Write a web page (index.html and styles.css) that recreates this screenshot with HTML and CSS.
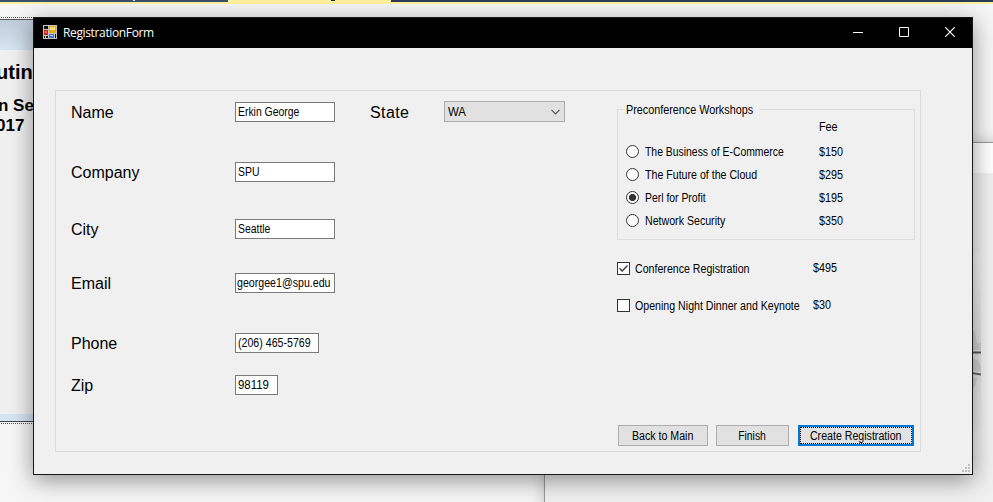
FILE: index.html
```html
<!DOCTYPE html>
<html lang="en">
<head>
<meta charset="utf-8">
<title>RegistrationForm</title>
<link rel="stylesheet" href="styles.css">
</head>
<body>
<div class="desktop">
  <div class="tabs"><span class="tab"><i class="descender"></i></span><span class="tab active"><i class="descender"></i></span><span class="tab rest"></span></div>
  <div class="designer">
    <div class="designer-inner">
      <div class="designer-title"></div>
      <div class="designer-body"><h1>uting</h1><p>n Ses</p><p class="year">017</p></div>
      <div class="designer-foot"></div>
    </div>
  </div>
  <div class="browser">
    <div class="browser-bar"></div>
    <div class="photo">
      <svg width="61" height="176" viewBox="0 0 61 176"><path d="M50 74L55 78L57 90L61 88V96H50ZM50 104L58 106L61 112V118L50 116ZM50 123L57 124L55 132L50 138Z" fill="#bdbdbd" opacity=".5"/><path d="M45 98.500H61" stroke="#585858" stroke-width="2"/><path d="M45 118L61 120.500" stroke="#666" stroke-width="2"/></svg>
    </div>
  </div>

  <div class="window">
    <div class="titlebar">
      <svg class="app-icon" width="14" height="14" viewBox="0 0 14 14">
        <path d="M0 0H14V14H0Z" fill="#c9c5bd"/>
        <path d="M1 1H5V4H1ZM1 11H2V13H1ZM3 11H5V13H3ZM12 9H13V13H12Z" fill="#111"/>
        <path d="M1 5H5V10H1Z" fill="#c6241d"/><path d="M2 6H4V8H2Z" fill="#f06a50"/>
        <path d="M6 1H13V8H6Z" fill="#e9a90c"/><path d="M7 2H12V5H7Z" fill="#ffdf70"/>
        <path d="M6 9H11V13H6Z" fill="#3f78dc"/><path d="M7 10H10V11H7Z" fill="#9cc4ff"/>
      </svg>
      <span class="caption">RegistrationForm</span>
      <div class="controls">
        <svg width="10" height="10" viewBox="0 0 10 10"><path d="M0 5.500H10" stroke="#fff"/></svg>
        <svg width="10" height="10" viewBox="0 0 10 10"><path d="M.5 .5H9.500V9.500H.5Z" stroke="#fff" fill="none"/></svg>
        <svg width="10" height="10" viewBox="0 0 10 10"><path d="M.2 .2L9.800 9.800M9.800 .2L.2 9.800" stroke="#fff" stroke-width="1.200"/></svg>
      </div>
    </div>
    <div class="client">
      <div class="panel">
        <div class="fields">
          <label>Name</label><div class="box"><span class="t">Erkin George</span></div>
          <label class="state">State</label><div class="select"><span class="t full">WA</span><svg width="9" height="6" viewBox="0 0 9 6"><path d="M.5 .8L4.500 4.800L8.500 .8" fill="none" stroke="#555" stroke-width="1.200"/></svg></div>
          <label class="first">Company</label><div class="box"><span class="t">SPU</span></div>
          <label class="first">City</label><div class="box"><span class="t">Seattle</span></div>
          <label class="first">Email</label><div class="box tight"><span class="t mid">georgee1@spu.edu</span></div>
          <label class="first">Phone</label><div class="box phone"><span class="t mid">(206) 465-5769</span></div>
          <label class="first">Zip</label><div class="box zip"><span class="t full">98119</span></div>
        </div>
        <div class="side">
          <div class="group">
            <div class="legend"><span class="t wide">Preconference Workshops</span></div>
            <div class="row fee-head"><span></span><span></span><span class="t wide">Fee</span></div>
            <div class="row"><i class="radio"></i><span class="t">The Business of E-Commerce</span><span class="t wide">$150</span></div>
            <div class="row"><i class="radio"></i><span class="t mid">The Future of the Cloud</span><span class="t wide">$295</span></div>
            <div class="row"><i class="radio on"></i><span class="t">Perl for Profit</span><span class="t wide">$195</span></div>
            <div class="row"><i class="radio"></i><span class="t mid">Network Security</span><span class="t wide">$350</span></div>
          </div>
          <div class="option"><i class="check"><svg width="11" height="11" viewBox="0 0 11 11"><path d="M1.500 5.300L4.200 8L9.500 2.500" fill="none" stroke="#333" stroke-width="1.300"/></svg></i><span class="t mid">Conference Registration</span><span class="t wide price">$495</span></div>
          <div class="option"><i class="check"></i><span class="t mid">Opening Night Dinner and Keynote</span><span class="t wide price">$30</span></div>
          <div class="buttons">
            <div class="btn back"><span class="t mid">Back to Main</span></div>
            <div class="btn finish"><span class="t">Finish</span></div>
            <div class="btn create"><span class="t mid">Create Registration</span></div>
          </div>
        </div>
      </div>
      <svg class="grip" width="8" height="8" viewBox="0 0 8 8"><path d="M6 0H8V2H6ZM3 3H5V5H3ZM6 3H8V5H6ZM0 6H2V8H0ZM3 6H5V8H3ZM6 6H8V8H6Z" fill="#bfbfbf"/></svg>
    </div>
  </div>
</div>
</body>
</html>
```
FILE: styles.css
```css
* { box-sizing: border-box; }
body { margin: 0; font-family: "Liberation Sans", Arial, sans-serif; color: #000; }
svg { display: block; flex: none; }
.desktop { position: relative; width: 993px; height: 502px; overflow: hidden; background: #f6f6f6; }

.tabs { display: flex; height: 4px; border-bottom: 2px solid #fff29d; }
.tab { width: 228px; background: #3b4f6e; }
.tab.active { width: 163px; background: #fff29d; }
.tab.rest { flex: 1; background: #2b3a57; }
.descender { display: block; width: 2px; height: 1px; margin-left: 133px; background: #ddd; }
.active .descender { width: 4px; margin-left: 103px; background: #222; }

.designer { position: absolute; left: -2px; top: 17px; width: 100px; height: 407px; border: 1px dotted #555; border-left: 0; }
.designer-inner { margin-top: 1px; height: 403px; display: flex; flex-direction: column; border-top: 1px solid #555; border-bottom: 1px solid #444; background: #f0f0f0; }
.designer-title { height: 30px; background: linear-gradient(#bfcddb, #d7e4f2); }
.designer-body { flex: 1; padding: 11px 0 0 2px; font-weight: bold; white-space: nowrap; }
.designer-body h1 { margin: 0 0 13px -4px; font-size: 20px; line-height: 22px; }
.designer-body p { margin: 0 0 0 -2px; font-size: 17px; line-height: 20px; }
.designer-body .year { margin-left: -4px; }
.designer-foot { height: 7px; background: #d7e4f2; }

.browser { position: absolute; left: 544px; top: 142px; width: 460px; height: 370px; border: 1px solid #999; background: #f0f0f0; box-shadow: 0 0 14px rgba(0,0,0,.2); }
.browser-bar { height: 30px; background: #fff; }
.photo { width: 61px; height: 176px; margin: 81px 0 0 375px; background: linear-gradient(#f4f4f4, #e2e2e2 50%, #eee); }

.window { position: absolute; left: 33px; top: 17px; width: 940px; height: 458px; border: 1px solid #181818; background: #f0f0f0; box-shadow: 0 5px 22px rgba(0,0,0,.42); }
.titlebar { display: flex; align-items: center; height: 30px; padding: 0 17px 0 9px; background: #000; color: #fff; }
.app-icon { margin-top: -2px; }
.caption { margin-left: 6px; font: 12px/16px "Open Sans", sans-serif; letter-spacing: -.36px; }
.controls { display: flex; gap: 36px; margin-left: auto; margin-top: -2px; }
.client { padding: 42px 51px 0 21px; }
.panel { display: flex; height: 362px; border: 1px solid #dcdcdc; padding: 10px 5px 0 15px; }

.t { display: inline-block; font-size: 12px; line-height: 14px; white-space: nowrap; transform: scaleX(.867); transform-origin: left center; }
.t.mid { transform: scaleX(.885); }
.t.wide { transform: scaleX(.9); }
.t.full { transform: scaleX(.95); }

.fields { width: 546px; display: grid; grid-template-columns: 164px 135px 74px 121px; grid-template-rows: 60px 57px 54px 60px 42px 21px; align-items: start; }
.fields label { padding-top: 1px; font-size: 16px; line-height: 22px; }
.fields .first { grid-column: 1; }
.fields .state { letter-spacing: .4px; }
.box { width: 100px; height: 20px; margin-top: 1px; padding: 2px 0 0 2px; border: 1px solid #7a7a7a; background: #fff; overflow: hidden; }
.box.tight { padding-left: 1px; }
.box.phone { width: 84px; }
.box.zip { width: 43px; }
.box .t { display: block; }
.select { display: flex; align-items: center; justify-content: space-between; height: 21px; padding: 0 4px 0 3px; border: 1px solid #adadad; background: #e1e1e1; }

.side { width: 298px; padding-top: 8px; }
.group { height: 131px; border: 1px solid #dcdcdc; padding-left: 8px; }
.legend { width: 134px; height: 14px; margin: -7px 0 3px -1px; padding-left: 1px; background: #f0f0f0; line-height: 14px; }
.legend .t { display: block; }
.row { display: grid; grid-template-columns: 19px 174px 60px; align-items: center; height: 23px; }
.row.fee-head { height: 14px; margin-bottom: 6px; }
.radio { width: 13px; height: 13px; border: 1px solid #333; border-radius: 50%; background: #fff; }
.radio.on { background: radial-gradient(circle, #333 3.200px, #fff 3.900px); }
.option { display: grid; grid-template-columns: 18px 178px 60px; align-items: center; height: 14px; margin-top: 22px; }
.option + .option { margin-top: 23px; }
.check { width: 13px; height: 13px; margin-top: -1px; border: 1px solid #333; background: #fff; }
.price { margin-top: -2px; }
.buttons { display: flex; margin: 112px 0 0 1px; }
.btn { display: flex; align-items: center; justify-content: center; height: 21px; border: 1px solid #adadad; background: #e1e1e1; }
.btn .t { transform-origin: center; }
.back { width: 90px; margin-right: 8px; }
.finish { width: 73px; margin-right: 9px; }
.create { width: 116px; border: 2px solid #0078d7; outline: 1px dotted #000; outline-offset: -3px; }
.grip { margin: 12px 0 0 907px; }
```
